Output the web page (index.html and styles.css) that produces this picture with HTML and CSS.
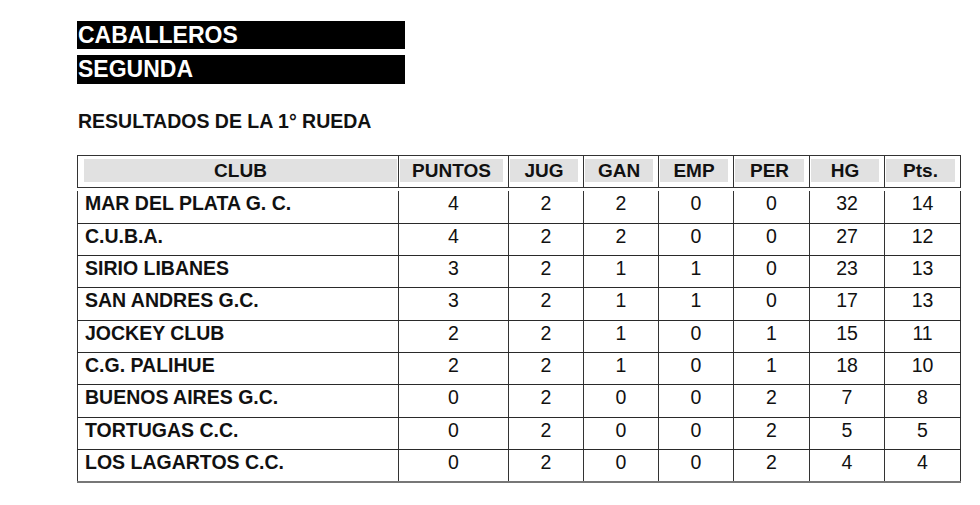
FILE: index.html
```html
<!DOCTYPE html>
<html lang="es">
<head>
<meta charset="utf-8">
<title>Caballeros Segunda</title>
<link rel="stylesheet" href="styles.css">
</head>
<body>
<main class="page">
  <div class="bar bar-first">CABALLEROS</div>
  <div class="bar bar-second">SEGUNDA</div>
  <h2 class="subtitle">RESULTADOS DE LA 1° RUEDA</h2>

  <table class="grid head">
    <colgroup>
      <col class="c-club"><col class="c-pts"><col class="c-n"><col class="c-n"><col class="c-n"><col class="c-n6"><col class="c-n"><col class="c-n6">
    </colgroup>
    <thead>
      <tr>
        <th class="th-club"><div class="hcell">CLUB</div></th>
        <th><div class="hcell">PUNTOS</div></th>
        <th><div class="hcell">JUG</div></th>
        <th><div class="hcell">GAN</div></th>
        <th><div class="hcell">EMP</div></th>
        <th><div class="hcell">PER</div></th>
        <th><div class="hcell">HG</div></th>
        <th><div class="hcell">Pts.</div></th>
      </tr>
    </thead>
  </table>

  <table class="grid body">
    <colgroup>
      <col class="c-club"><col class="c-pts"><col class="c-n"><col class="c-n"><col class="c-n"><col class="c-n6"><col class="c-n"><col class="c-n6">
    </colgroup>
    <tbody>
      <tr><td class="club">MAR DEL PLATA G. C.</td><td>4</td><td>2</td><td>2</td><td>0</td><td>0</td><td>32</td><td>14</td></tr>
      <tr><td class="club">C.U.B.A.</td><td>4</td><td>2</td><td>2</td><td>0</td><td>0</td><td>27</td><td>12</td></tr>
      <tr><td class="club">SIRIO LIBANES</td><td>3</td><td>2</td><td>1</td><td>1</td><td>0</td><td>23</td><td>13</td></tr>
      <tr><td class="club">SAN ANDRES G.C.</td><td>3</td><td>2</td><td>1</td><td>1</td><td>0</td><td>17</td><td>13</td></tr>
      <tr><td class="club">JOCKEY CLUB</td><td>2</td><td>2</td><td>1</td><td>0</td><td>1</td><td>15</td><td>11</td></tr>
      <tr><td class="club">C.G. PALIHUE</td><td>2</td><td>2</td><td>1</td><td>0</td><td>1</td><td>18</td><td>10</td></tr>
      <tr><td class="club">BUENOS AIRES G.C.</td><td>0</td><td>2</td><td>0</td><td>0</td><td>2</td><td>7</td><td>8</td></tr>
      <tr><td class="club">TORTUGAS C.C.</td><td>0</td><td>2</td><td>0</td><td>0</td><td>2</td><td>5</td><td>5</td></tr>
      <tr><td class="club">LOS LAGARTOS C.C.</td><td>0</td><td>2</td><td>0</td><td>0</td><td>2</td><td>4</td><td>4</td></tr>
    </tbody>
  </table>
</main>
</body>
</html>
```

FILE: styles.css
```css
html, body {
  margin: 0;
  padding: 0;
  background: #ffffff;
}

body {
  font-family: "Liberation Sans", Arial, sans-serif;
  color: #111111;
}

.page {
  padding: 21px 0 0 77px;
}

.bar {
  width: 327px;
  background: #000000;
  color: #ffffff;
  font-weight: bold;
  font-size: 23px;
  padding-left: 1px;
}

.bar-first {
  height: 28px;
  line-height: 28px;
}

.bar-second {
  margin-top: 6px;
  height: 29px;
  line-height: 28px;
}

.subtitle {
  margin: 26px 0 0 1px;
  font-size: 19.5px;
  line-height: 22px;
  font-weight: bold;
}

.grid {
  border-collapse: collapse;
  table-layout: fixed;
  width: 884px;
  font-size: 19.5px;
}

.c-club { width: 321px; }
.c-pts { width: 110px; }
.c-n { width: 75px; }
.c-n6 { width: 76px; }

.head {
  margin-top: 23px;
  font-size: 19px;
}

.head th {
  border: 1px solid #333333;
  padding: 3px 5px 5px 1px;
  height: 23px;
  font-weight: bold;
}

.head th.th-club {
  padding-left: 6px;
  padding-right: 1px;
}

.hcell {
  background: #e1e1e1;
  height: 23px;
  line-height: 23px;
  text-align: center;
}

.body {
  margin-top: 3px;
}

.body td {
  border-left: 1px solid #333333;
  border-right: 1px solid #333333;
  border-bottom: 1px solid #2a2a2a;
  height: 32.3px;
  padding: 1px 0 0 0;
  box-sizing: border-box;
  line-height: 22px;
  vertical-align: top;
  text-align: center;
}

.body tr:last-child td {
  border-bottom: 2px solid #777777;
}

.body td.club {
  text-align: left;
  font-weight: bold;
  padding-left: 7px;
}
```
